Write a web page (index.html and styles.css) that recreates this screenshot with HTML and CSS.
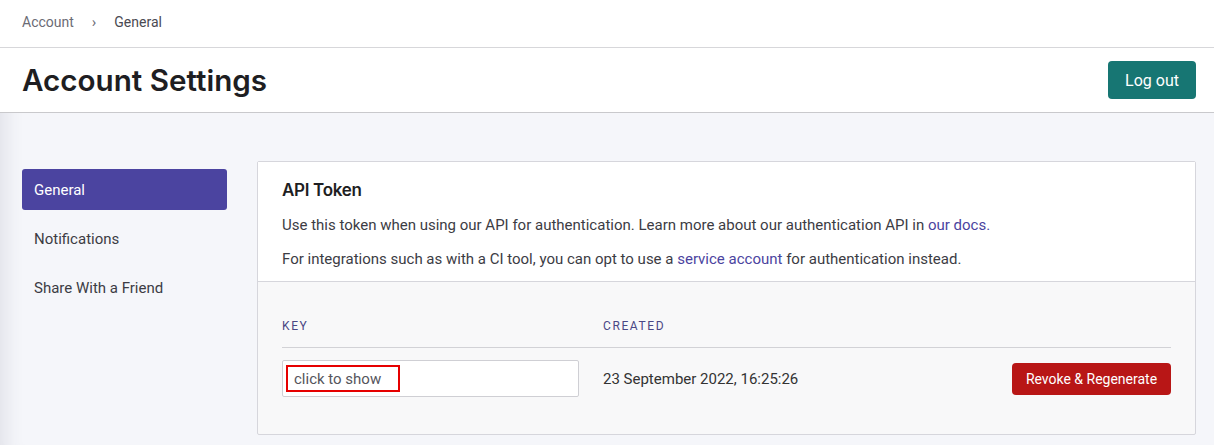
FILE: index.html
```html
<!DOCTYPE html>
<html lang="en">
<head>
<meta charset="utf-8">
<title>Account Settings</title>
<link rel="stylesheet" href="styles.css">
</head>
<body>
<div class="page">
  <header class="header">
    <nav class="crumbs">
      <a class="crumb" href="#">Account</a>
      <span class="sep">›</span>
      <span class="crumb current">General</span>
    </nav>
    <div class="titlebar">
      <h1 class="title">Account Settings</h1>
      <button class="btn btn-teal">Log out</button>
    </div>
  </header>
  <main class="content">
    <aside class="sidenav">
      <a class="navitem active" href="#">General</a>
      <a class="navitem" href="#">Notifications</a>
      <a class="navitem" href="#">Share With a Friend</a>
    </aside>
    <section class="card">
      <div class="card-top">
        <h2 class="card-title">API Token</h2>
        <p class="text">Use this token when using our API for authentication. Learn more about our authentication API in <a class="link" href="#">our docs.</a></p>
        <p class="text">For integrations such as with a CI tool, you can opt to use a <a class="link" href="#">service account</a> for authentication instead.</p>
      </div>
      <div class="card-bottom">
        <div class="table">
          <div class="th">Key</div>
          <div class="th">Created</div>
          <div class="th"></div>
          <div class="td">
            <div class="keyfield"><span class="reveal">click to show</span></div>
          </div>
          <div class="td date">23 September 2022, 16:25:26</div>
          <div class="td right"><button class="btn btn-red">Revoke &amp; Regenerate</button></div>
        </div>
      </div>
    </section>
  </main>
</div>
</body>
</html>
```
FILE: styles.css
```css
* { box-sizing: border-box; }
html, body { margin: 0; padding: 0; }
body {
  font-family: Roboto, "Liberation Sans", sans-serif;
  background: #f5f6fa;
  color: #333;
  width: 1214px;
  height: 445px;
  overflow: hidden;
}
.page {
  min-height: 445px;
  box-shadow: inset 22px 0 18px -16px rgba(60, 60, 90, 0.10);
}
.header {
  background: #fff;
  border-bottom: 1px solid #c9c9cc;
}
.crumbs {
  height: 48px;
  display: flex;
  align-items: center;
  padding: 0 22px 4px;
  border-bottom: 1px solid #d7d7da;
  font-size: 14px;
}
.crumb { color: #6b6b75; text-decoration: none; }
.crumb.current { color: #4a4a52; }
.sep { color: #6b6b75; margin: 0 18px 0 18px; font-size: 15px; }
.titlebar {
  height: 64px;
  display: flex;
  align-items: center;
  justify-content: space-between;
  padding: 0 18px 0 22px;
}
.title {
  margin: 0;
  font-family: Inter, Roboto, sans-serif;
  font-weight: 600;
  font-size: 29.6px;
  color: #1e1e22;
}
.btn {
  border: 0;
  border-radius: 4px;
  color: #fff;
  font-family: Roboto, "Liberation Sans", sans-serif;
  cursor: pointer;
}
.btn-teal {
  background: #177673;
  width: 88px;
  height: 38px;
  font-size: 16px;
}
.btn-red {
  background: #b81616;
  width: 159px;
  height: 32px;
  font-size: 14px;
}
.content {
  display: flex;
  gap: 30px;
  padding: 48px 18px 0 22px;
}
.sidenav {
  width: 205px;
  flex: none;
  display: flex;
  flex-direction: column;
  gap: 8px;
  padding-top: 8px;
}
.navitem {
  height: 41px;
  display: flex;
  align-items: center;
  padding-left: 12px;
  border-radius: 3px;
  font-size: 15px;
  color: #3c3c44;
  text-decoration: none;
}
.navitem.active { background: #4b44a0; color: #fff; }
.card {
  flex: 1;
  background: #f8f8f9;
  border: 1px solid #d6d6dc;
  border-radius: 2px;
}
.card-top {
  background: #fff;
  padding: 16px 24px 12px;
  border-bottom: 1px solid #d6d6dc;
}
.card-title {
  margin: 0;
  font-family: Inter, Roboto, sans-serif;
  font-weight: 600;
  font-size: 17px;
  line-height: 24px;
  letter-spacing: -0.3px;
  color: #1e1e22;
}
.text {
  margin: 13px 0 0;
  font-size: 15px;
  line-height: 20px;
  color: #3c3c44;
}
.text + .text { margin-top: 14px; }
.link { color: #4b44a0; text-decoration: none; }
.card-bottom {
  padding: 36px 24px 37px;
}
.table {
  display: grid;
  grid-template-columns: 321px 1fr auto;
}
.th {
  font-size: 12px;
  line-height: 16px;
  letter-spacing: 1.6px;
  text-transform: uppercase;
  color: #4a4785;
  padding-bottom: 13px;
  border-bottom: 1px solid #d2d2d6;
}
.td {
  padding-top: 12px;
  display: flex;
  align-items: center;
}
.td.right { justify-content: flex-end; }
.date { font-size: 15px; color: #333; }
.keyfield {
  width: 297px;
  height: 37px;
  background: #fff;
  border: 1px solid #cfcfd4;
  border-radius: 2px;
  padding: 6px 3px;
  display: flex;
  align-items: center;
}
.reveal {
  width: 114px;
  height: 27px;
  border: 2px solid #e60000;
  display: flex;
  align-items: center;
  padding-left: 6px;
  font-size: 15px;
  color: #55555c;
}
```
